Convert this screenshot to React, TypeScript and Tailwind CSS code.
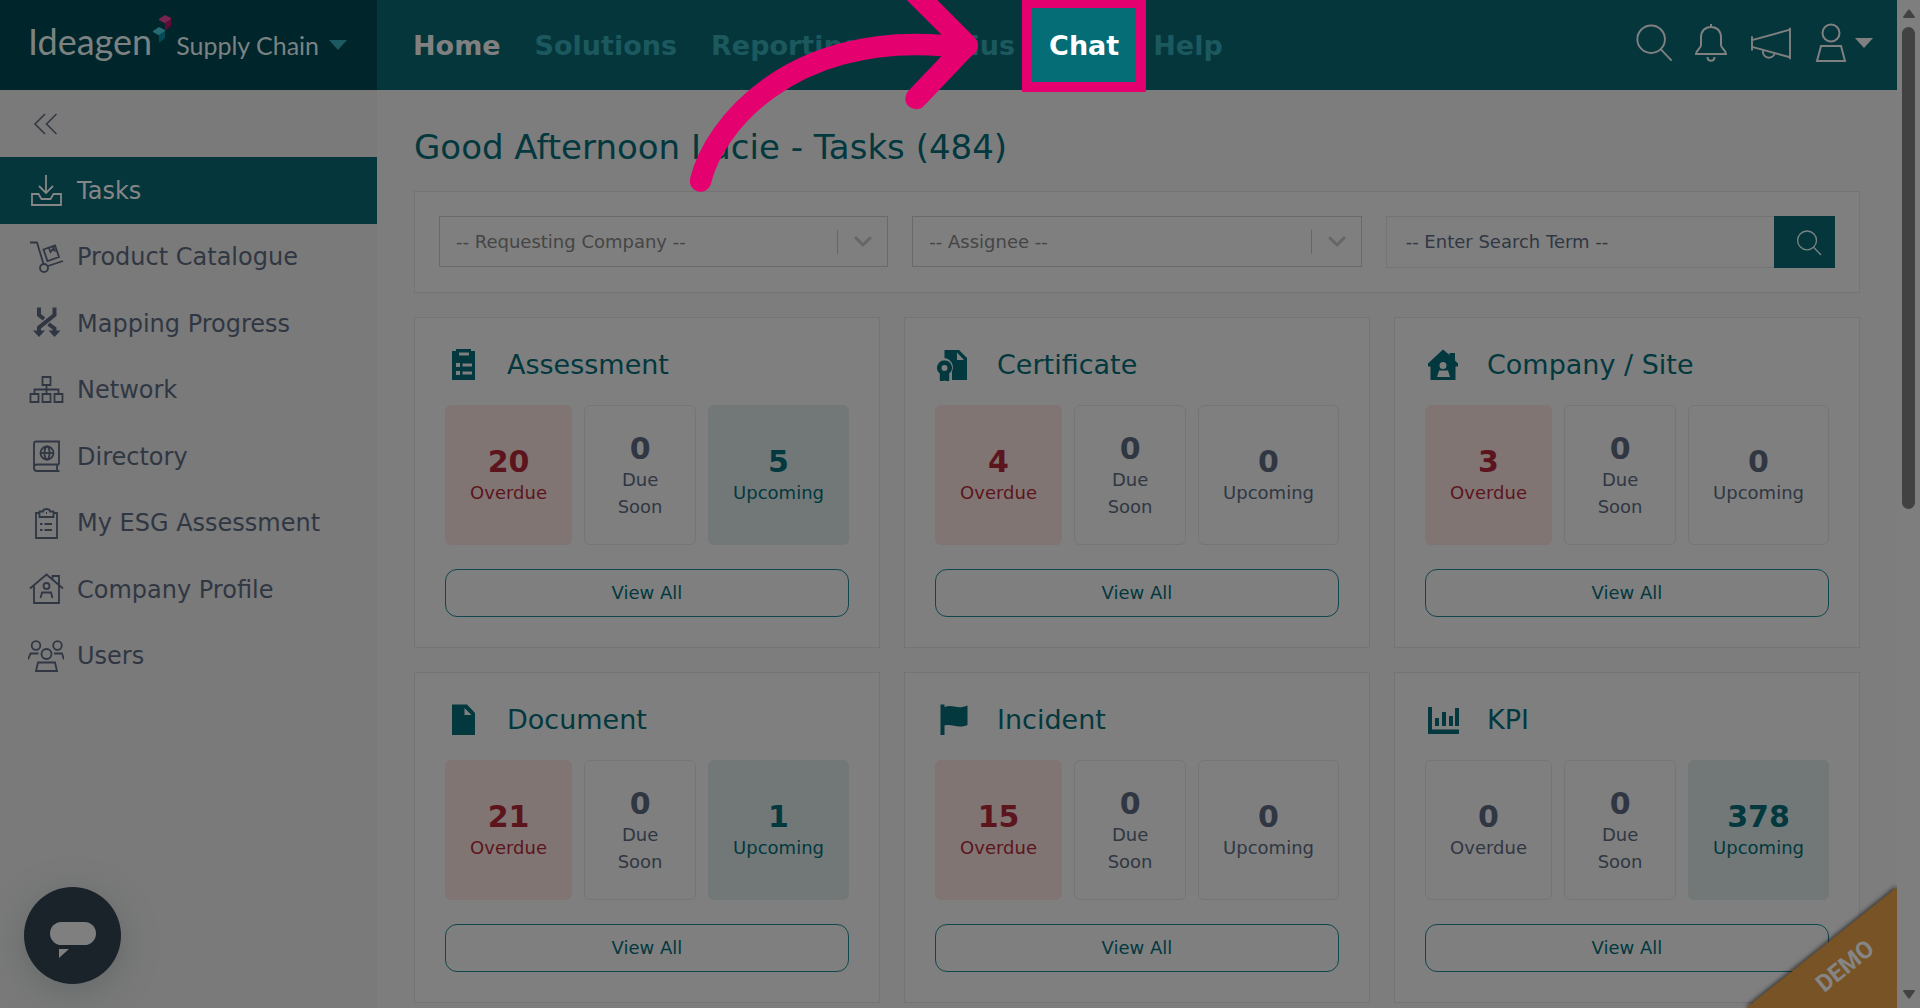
import React from "react";
import clsx from "clsx";

type Tone = "none" | "red" | "teal";

const navLinks = ["Home", "Solutions", "Reporting", "Marcius", "Chat", "Help"];

const menuItems = [
	{ label: "Tasks", icon: <TrayIcon />, active: true },
	{ label: "Product Catalogue", icon: <TrolleyIcon /> },
	{ label: "Mapping Progress", icon: <MappingIcon /> },
	{ label: "Network", icon: <NetworkIcon /> },
	{ label: "Directory", icon: <DirectoryIcon /> },
	{ label: "My ESG Assessment", icon: <ClipboardIcon /> },
	{ label: "Company Profile", icon: <HouseIcon /> },
	{ label: "Users", icon: <UsersIcon /> },
];

const cards = [
	{ title: "Assessment", icon: <AssessmentGlyph />, counts: [20, 0, 5] },
	{ title: "Certificate", icon: <CertificateGlyph />, counts: [4, 0, 0] },
	{ title: "Company / Site", icon: <SiteGlyph />, counts: [3, 0, 0] },
	{ title: "Document", icon: <DocumentGlyph />, counts: [21, 0, 1] },
	{ title: "Incident", icon: <FlagGlyph />, counts: [15, 0, 0] },
	{ title: "KPI", icon: <KpiGlyph />, counts: [0, 0, 378] },
];

export default function App() {
	return (
		<div className="relative flex h-screen overflow-hidden bg-[#7d7d7d] font-['Verdana','DejaVu_Sans',sans-serif] text-[#303743]">
			<div className="flex min-w-0 flex-1 flex-col">
				<Header />
				<div className="flex min-h-0 flex-1">
					<Sidebar />
					<main className="min-w-0 flex-1 overflow-hidden px-[37px] pt-[37px]">
						<h1 className="mb-6 text-[34px] leading-10 text-[#02383e]">
							Good Afternoon Lucie - Tasks (484)
						</h1>
						<Filters />
						<div className="mt-6 grid grid-cols-3 gap-6">
							{cards.map((card) => (
								<TaskCard key={card.title} {...card} />
							))}
						</div>
					</main>
				</div>
			</div>
			<Scrollbar />
			<ChatLauncher />
			<DemoRibbon />
			<PointerArrow />
		</div>
	);
}

function Header() {
	return (
		<header className="flex h-[90px] shrink-0 bg-[#04363c]">
			<button
				type="button"
				className="flex w-[377px] shrink-0 items-center bg-[#00262b] pb-2 pl-7 font-['Lato',sans-serif] text-[#7c8282]"
			>
				<span className="flex items-baseline">
					<span className="text-4xl leading-10">Ideagen</span>
					<svg width="20" height="28" viewBox="0 0 20 28" className="-translate-y-3">
						<path d="M7 4 13 0l6 3v2l-5 4-7-4z" fill="#7a2450" />
						<path d="M19 4v7l-6 5V8z" fill="#5e0d38" />
						<path d="M1 16l6-4 6 3v2l-5 4-7-4z" fill="#256a74" />
						<path d="M13 16v7l-6 5v-8z" fill="#034a58" />
					</svg>
					<span className="ml-1 text-[25px] leading-8">Supply Chain</span>
				</span>
				<svg width="18" height="10" viewBox="0 0 18 10" className="mt-2 ml-2.5">
					<path d="M0 0h18L9 10z" fill="#1b5a61" />
				</svg>
			</button>
			<nav className="flex flex-1 items-center gap-[34px] pt-0.5 pl-9 text-[27px] leading-9 font-bold text-[#1c595f]">
				{navLinks.map((link) =>
					link === "Chat" ? (
						<a key={link} href="#chat" className="relative text-white">
							<span className="absolute -inset-x-[27px] -top-[30px] -bottom-7 border-[10px] border-[#e5006f] bg-[#046d76]" />
							<span className="relative">{link}</span>
						</a>
					) : (
						<a
							key={link}
							href={`#${link.toLowerCase()}`}
							className={clsx(link === "Home" && "text-[#808080]")}
						>
							{link}
						</a>
					)
				)}
			</nav>
			<div className="flex items-center gap-5 pr-6 pb-1 text-[#808080]">
				<button type="button" aria-label="Search">
					<SearchIcon className="size-[38px]" />
				</button>
				<button type="button" aria-label="Notifications">
					<svg width="36" height="40" viewBox="0 0 36 40" fill="none" stroke="currentColor" strokeWidth="2">
						<path d="M18 1v3M8 14.500C8 8 12 4 18 4s10 4 10 10.500V22c0 4 5 4.500 5 9H3c0-4.500 5-5 5-9z" />
						<path d="M14.500 34c0 5 7 5 7 0" />
					</svg>
				</button>
				<button type="button" aria-label="Announcements">
					<svg width="44" height="38" viewBox="0 0 44 40" fill="none" stroke="currentColor" strokeWidth="2">
						<path d="M2 13v15M42 4v33M2 17 42 6M2 24l40 11" />
						<path d="M13.500 27.500v2c0 3 2.500 6 6 6s6-2.500 6.500-5" />
					</svg>
				</button>
				<button type="button" aria-label="Account" className="flex items-center gap-1.5">
					<svg width="36" height="40" viewBox="0 0 36 40" fill="none" stroke="currentColor" strokeWidth="2">
						<circle cx="18" cy="10" r="8.500" />
						<path d="M8 23h20l4 15H4z" />
					</svg>
					<svg width="18" height="10" viewBox="0 0 18 10">
						<path d="M0 0h18L9 10z" fill="currentColor" />
					</svg>
				</button>
			</div>
		</header>
	);
}

function Sidebar() {
	return (
		<aside className="w-[377px] shrink-0 bg-[#7a7a7a]">
			<button
				type="button"
				aria-label="Collapse menu"
				className="flex h-[67px] items-center pl-[33px]"
			>
				<svg width="26" height="24" viewBox="0 0 26 24" fill="none" stroke="currentColor" strokeWidth="1.500">
					<path d="M12 2 2 12l10 10M23.500 2l-10 10 10 10" />
				</svg>
			</button>
			<nav className="grid h-[532px] grid-rows-8">
				{menuItems.map(({ label, icon, active }) => (
					<a
						key={label}
						href="#"
						className={clsx(
							"flex items-center gap-[13px] pl-7 text-2xl leading-8",
							active && "bg-[#04363c] text-[#868686]"
						)}
					>
						{icon}
						<span className="pt-px">{label}</span>
					</a>
				))}
			</nav>
		</aside>
	);
}

function Filters() {
	return (
		<form className="grid grid-cols-3 items-start gap-6 border border-[#747474] bg-[#7f7f7f] p-6 text-lg leading-6">
			<FilterSelect name="company" label="Requesting Company" />
			<FilterSelect name="assignee" label="Assignee" />
			<div className="flex h-[52px]">
				<input
					type="text"
					aria-label="Search term"
					placeholder="-- Enter Search Term --"
					className="min-w-0 flex-1 border border-r-0 border-[#747474] px-[19px] outline-none placeholder:text-[#303743]"
				/>
				<button
					type="submit"
					aria-label="Search tasks"
					className="flex w-[61px] items-center justify-center bg-[#04363c] pt-0.5 pl-2 text-[#7b8585]"
				>
					<SearchIcon className="size-[26px]" />
				</button>
			</div>
		</form>
	);
}

function FilterSelect({ name, label }: { name: string; label: string }) {
	return (
		<div className="relative">
			<select
				name={name}
				aria-label={label}
				className="block h-[51px] w-full appearance-none border border-[#6a6a6a] px-4 text-[#454545]"
			>
				<option>{`-- ${label} --`}</option>
			</select>
			<span className="pointer-events-none absolute inset-y-0 right-4 flex items-center gap-4">
				<span className="h-6 w-px bg-[#666666]" />
				<svg width="18" height="12" viewBox="0 0 18 12" fill="none" stroke="#666666" strokeWidth="3" strokeLinecap="round">
					<path d="m2 2 7 7 7-7" />
				</svg>
			</span>
		</div>
	);
}

function TaskCard({
	title,
	icon,
	counts,
}: {
	title: string;
	icon: React.ReactNode;
	counts: number[];
}) {
	const [overdue, dueSoon, upcoming] = counts;
	return (
		<section className="border border-[#747474] bg-[#7f7f7f] p-[30px] text-lg">
			<h2 className="mb-6 flex h-[33px] items-center gap-[26px] text-[27px] leading-8 text-[#02383e]">
				{icon}
				{title}
			</h2>
			<div className="mb-6 grid h-[140px] grid-cols-[127fr_112fr_140fr] gap-3">
				<Tile count={overdue} label="Overdue" tone={overdue ? "red" : "none"} />
				<Tile count={dueSoon} label="Due Soon" tone="none" />
				<Tile count={upcoming} label="Upcoming" tone={upcoming ? "teal" : "none"} />
			</div>
			<button
				type="button"
				className="h-12 w-full rounded-xl border border-[#10474d] text-[#02383e]"
			>
				View All
			</button>
		</section>
	);
}

function Tile({ count, label, tone }: { count: number; label: string; tone: Tone }) {
	return (
		<div
			className={clsx(
				"flex flex-col items-center justify-center rounded-md border px-6 text-center leading-[27px]",
				tone === "none" && "border-[#757575]",
				tone === "red" && "border-[#807573] bg-[#807573] text-[#5c141d]",
				tone === "teal" && "border-[#717877] bg-[#717877] text-[#02383e]"
			)}
		>
			<span className="text-3xl leading-[35px] font-bold">{count}</span>
			<span>{label}</span>
		</div>
	);
}

function Scrollbar() {
	return (
		<div className="flex w-[23px] shrink-0 flex-col items-center bg-[#7e7e7e] pt-[9px] pb-[9px]">
			<svg width="12" height="9" viewBox="0 0 12 9">
				<path d="M5 1q1-1 2 0l5 7q0 1-1 1H1q-1 0-1-1z" fill="#424242" />
			</svg>
			<div className="mt-[9px] h-[482px] w-[13px] rounded-full bg-[#424242]" />
			<svg width="12" height="9" viewBox="0 0 12 9" className="mt-auto">
				<path d="M5 8q1 1 2 0l5-7q0-1-1-1H1Q0 0 0 1z" fill="#424242" />
			</svg>
		</div>
	);
}

function ChatLauncher() {
	return (
		<button
			type="button"
			aria-label="Open messenger"
			className="absolute bottom-6 left-6 flex size-[97px] items-center justify-center rounded-full bg-[#1a222a] shadow-[0_8px_36px_rgba(60,75,75,0.35)]"
		>
			<svg width="46" height="36" viewBox="0 0 46 36" fill="#7f7f7f" className="mt-2">
				<rect width="46" height="23" rx="11.500" />
				<path d="M9 27h10l-10 9z" />
			</svg>
		</button>
	);
}

function DemoRibbon() {
	return (
		<div className="absolute right-[23px] bottom-0 h-[129px] w-[161px] overflow-hidden">
			<svg width="161" height="129" viewBox="0 0 161 129" className="absolute inset-0">
				<path
					d="M10 129 161 8v121z"
					fill="#775326"
					className="drop-shadow-[-1px_-1px_2px_rgba(0,0,0,0.6)]"
				/>
			</svg>
			<span className="absolute right-3 bottom-[26px] w-20 -rotate-39 text-center font-['Roboto',sans-serif] text-2xl leading-8 font-bold text-[#858585]">
				DEMO
			</span>
		</div>
	);
}

// Callout arrow that points at the highlighted nav link
function PointerArrow() {
	return (
		<svg
			width="300"
			height="200"
			viewBox="690 0 300 200"
			fill="none"
			stroke="#e5006f"
			strokeWidth="21.500"
			strokeLinecap="round"
			strokeLinejoin="round"
			className="pointer-events-none absolute top-0 left-[690px]"
		>
			<path d="M700.500 181C714 125 790 34 942 45.500L967 46" />
			<path d="M912-10l55 55-51 53.500" />
		</svg>
	);
}

function SearchIcon({ className }: { className?: string }) {
	return (
		<svg viewBox="0 0 40 40" fill="none" stroke="currentColor" strokeWidth="2" className={className}>
			<circle cx="17" cy="16" r="14.500" />
			<path d="m27 26.500 11.500 12" />
		</svg>
	);
}

function LineIcon({ children }: { children: React.ReactNode }) {
	return (
		<svg
			width="36"
			height="36"
			viewBox="0 0 36 36"
			fill="none"
			stroke="currentColor"
			strokeWidth="1.800"
			className="shrink-0"
		>
			{children}
		</svg>
	);
}

function TrayIcon() {
	return (
		<LineIcon>
			<path d="M18 3v18M11 14l7 7 7-7" />
			<path d="M4 22h6.500l3 5h9l3-5H33v11H4z" />
		</LineIcon>
	);
}

function TrolleyIcon() {
	return (
		<LineIcon>
			<path d="M2 3.500h7L15.500 25M20 27l15-5" />
			<circle cx="16" cy="29" r="4" />
			<path d="m15.500 10.500 11.500-4 4 11.500-11.500 4zM21 9l1.500 4 2-2.500 2 1L25 7.500" />
		</LineIcon>
	);
}

function MappingIcon() {
	return (
		<LineIcon>
			<g strokeWidth="4">
				<path d="M11 2.500V10l5 4M26.500 2.500V10L11 22.500V27M20.500 19l6 4.500V27" />
			</g>
			<path d="M5 25.500h12l-6 6.500zM20.500 25.500h12l-6 6.500z" fill="currentColor" stroke="none" />
		</LineIcon>
	);
}

function NetworkIcon() {
	return (
		<LineIcon>
			<path d="M14.500 5h8v8h-8zM18.500 13v9M6.500 22v-4.500h24V22" />
			<path d="M2.500 22h8v8h-8zM14.500 22h8v8h-8zM26.500 22h8v8h-8z" />
		</LineIcon>
	);
}

function DirectoryIcon() {
	return (
		<LineIcon>
			<path d="M31 26.500V3.500H8Q6 3.500 6 6v24q0 3 3 3h22.500M29 26.500V33M6 29q0-2.500 3-2.500h22" />
			<circle cx="19" cy="15" r="6.500" />
			<ellipse cx="19" cy="15" rx="2.500" ry="6.500" />
			<path d="M12.500 15h13" />
		</LineIcon>
	);
}

function ClipboardIcon() {
	return (
		<LineIcon>
			<path d="M11 8H8v25h21V8h-3" />
			<path d="M11.500 6.500H15q0-2.500 3.500-2.500T22 6.500h3.500V12h-14z" />
			<path d="M12 19h2.500M16.500 19h7.500M12 25h2.500M16.500 25h7.500" />
			<path d="M18 8h1" />
		</LineIcon>
	);
}

function HouseIcon() {
	return (
		<LineIcon>
			<path d="M2 17.500 18.500 3.500 35 17.500M6 14.500V32h25V5h-6.500v3.500" />
			<circle cx="18.500" cy="15" r="3" />
			<path d="M12.500 27l1.500-5.500h9l1.500 5.500" />
		</LineIcon>
	);
}

function UsersIcon() {
	return (
		<LineIcon>
			<circle cx="8" cy="7.500" r="4.300" />
			<circle cx="29.500" cy="7.500" r="4.300" />
			<circle cx="18.500" cy="16" r="5" />
			<path d="M0 21.500 2.500 15.500h8M36 21.500 34 15.500h-8M10 24.500h17l2 8.500H8z" />
		</LineIcon>
	);
}

function Glyph({ children }: { children: React.ReactNode }) {
	return (
		<svg width="36" height="33" viewBox="0 0 36 33" fill="currentColor" fillRule="evenodd" className="shrink-0">
			{children}
		</svg>
	);
}

function AssessmentGlyph() {
	return (
		<Glyph>
			<path d="M7 3h4V1h15v2h4v29H7zM14 4.500v3h10v-3zM11 15v4h4v-4zM17.500 15.500v3H27v-3zM11 23v4h4v-4zM17.500 23.500v3H27v-3z" />
		</Glyph>
	);
}

function CertificateGlyph() {
	return (
		<Glyph>
			<path d="M9.500 2H24l8 8v22H17v-8.500a9.500 9.500 0 0 0-7.500-13.500zM22 4.500v7.500h7z" />
			<path d="M9.500 12.500a7.300 7.300 0 0 1 4.700 13V34l-4.700-1.500L4.800 34v-8.500a7.300 7.300 0 0 1 4.700-13zM9.500 17a3 3 0 1 0 0 6 3 3 0 0 0 0-6z" />
		</Glyph>
	);
}

function SiteGlyph() {
	return (
		<Glyph>
			<path d="M18 1.500 24.500 7V5H30v7.500l3 3v3h-2.500V32h-25V18.500H3v-3zM18 14a3.500 3.500 0 1 0 0 7 3.500 3.500 0 0 0 0-7zM14 22.500l-2 6.500h13l-2-6.500z" />
		</Glyph>
	);
}

function DocumentGlyph() {
	return (
		<Glyph>
			<path d="M7 1.500h15l8 8.500v22H7zM19.500 5v7h7z" />
		</Glyph>
	);
}

function FlagGlyph() {
	return (
		<Glyph>
			<path d="M5.500 1.500h4V4c8-3 13 3 23-1.500V22c-10 4-15-1.500-23 .500V32h-4z" />
		</Glyph>
	);
}

function KpiGlyph() {
	return (
		<Glyph>
			<path d="M3 4h4v22.500h27V31H3zM10 15h4v8h-4zM17 9h4v14h-4zM24 13h4v10h-4zM30 5h4v18h-4z" />
		</Glyph>
	);
}
